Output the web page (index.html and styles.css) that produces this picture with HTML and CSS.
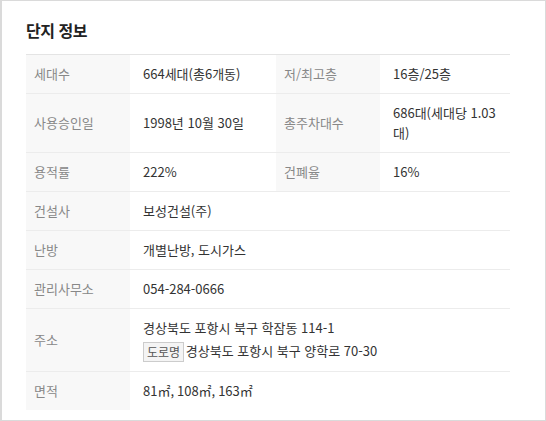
FILE: index.html
```html
<!DOCTYPE html>
<html lang="ko">
<head>
<meta charset="utf-8">
<link rel="stylesheet" href="styles.css">
</head>
<body>
<div class="panel">
  <h2 class="title">단지 정보</h2>
  <table class="info">
    <colgroup><col class="c-label"><col class="c-val"><col class="c-label"><col class="c-val2"></colgroup>
    <tr><th>세대수</th><td>664세대(총6개동)</td><th>저/최고층</th><td>16층/25층</td></tr>
    <tr><th>사용승인일</th><td>1998년 10월 30일</td><th>총주차대수</th><td class="tight">686대(세대당 1.03대)</td></tr>
    <tr><th>용적률</th><td>222%</td><th>건폐율</th><td>16%</td></tr>
    <tr><th>건설사</th><td colspan="3">보성건설(주)</td></tr>
    <tr><th>난방</th><td colspan="3">개별난방, 도시가스</td></tr>
    <tr><th>관리사무소</th><td colspan="3">054-284-0666</td></tr>
    <tr><th>주소</th><td colspan="3"><div>경상북도 포항시 북구 학잠동 114-1</div><div class="road"><span class="badge">도로명</span> 경상북도 포항시 북구 양학로 70-30</div></td></tr>
    <tr class="last"><th>면적</th><td colspan="3">81㎡, 108㎡, 163㎡</td></tr>
  </table>
</div>
</body>
</html>
```
FILE: styles.css
```css
html, body { margin: 0; padding: 0; background: #fff; }
body { font-family: "Noto Sans CJK KR", "Noto Sans", sans-serif; }
.panel {
  width: 546px; height: 421px; box-sizing: border-box;
  border: 1px solid #dadada; border-left-width: 2px;
  padding: 17px 0 0 24px;
}
.title {
  margin: 0 0 12px; font-size: 16px; line-height: 24px; font-weight: 700;
  color: #222; letter-spacing: -0.5px;
}
.info {
  width: 484px; table-layout: fixed; border-collapse: collapse;
  border-top: 1px solid #e4e4e4; font-size: 13px; line-height: 20px;
}
.c-label { width: 104px; }
.c-val { width: 146px; }
.c-val2 { width: 130px; }
.info tr { border-bottom: 1px solid #ececec; }
.info tr.last { border-bottom: 0; }
.info th {
  background: #f8f8f8; color: #888; font-weight: 400; text-align: left;
  padding: 9px 0 9px 8px; vertical-align: middle;
}
.info td {
  color: #333; padding: 9px 6px 9px 13px; vertical-align: middle;
}
.info td.tight { padding-right: 0; word-break: break-all; }
.road { margin-top: 3px; }
.badge {
  display: inline-block; border: 1px solid #ccc; background: #f4f4f4;
  color: #555; font-size: 12px; line-height: 18px; padding: 0 3px; vertical-align: middle;
  margin-right: -2px;
}
```
